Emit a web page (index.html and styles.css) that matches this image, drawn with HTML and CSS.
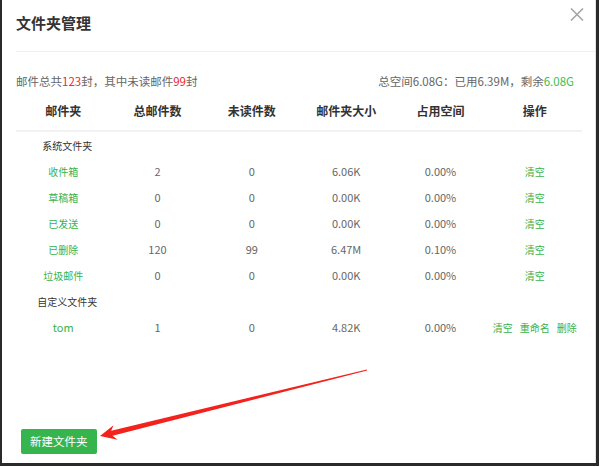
FILE: index.html
```html
<!DOCTYPE html>
<html lang="zh-CN">
<head>
<meta charset="utf-8">
<title>文件夹管理</title>
<link rel="stylesheet" href="styles.css">
</head>
<body>
<div class="frame">
  <div class="dialog">
    <div class="dialog-header">
      <h1 class="title">文件夹管理</h1>
      <span class="close" aria-label="关闭">
        <svg width="14" height="13" viewBox="0 0 14 13"><path d="M1 0.5 L13 12.5 M13 0.5 L1 12.5" stroke="#a6a6a6" stroke-width="1.6" fill="none"/></svg>
      </span>
    </div>
    <div class="summary">
      <span>邮件总共<em class="red">123</em>封，其中未读邮件<em class="red">99</em>封</span>
      <span>总空间6.08G：已用6.39M，剩余<em class="green">6.08G</em></span>
    </div>
    <table class="folders">
      <thead>
        <tr><th>邮件夹</th><th>总邮件数</th><th>未读件数</th><th>邮件夹大小</th><th>占用空间</th><th>操作</th></tr>
      </thead>
      <tbody>
        <tr class="group"><td class="group-label">系统文件夹</td><td></td><td></td><td></td><td></td><td></td></tr>
        <tr><td class="link">收件箱</td><td>2</td><td>0</td><td>6.06K</td><td>0.00%</td><td class="link">清空</td></tr>
        <tr><td class="link">草稿箱</td><td>0</td><td>0</td><td>0.00K</td><td>0.00%</td><td class="link">清空</td></tr>
        <tr><td class="link">已发送</td><td>0</td><td>0</td><td>0.00K</td><td>0.00%</td><td class="link">清空</td></tr>
        <tr><td class="link">已删除</td><td>120</td><td>99</td><td>6.47M</td><td>0.10%</td><td class="link">清空</td></tr>
        <tr><td class="link">垃圾邮件</td><td>0</td><td>0</td><td>0.00K</td><td>0.00%</td><td class="link">清空</td></tr>
        <tr class="group"><td class="group-label">自定义文件夹</td><td></td><td></td><td></td><td></td><td></td></tr>
        <tr><td class="link latin">tom</td><td>1</td><td>0</td><td>4.82K</td><td>0.00%</td><td class="link ops"><span>清空</span><span>重命名</span><span>删除</span></td></tr>
      </tbody>
    </table>
    <div class="footer">
      <button class="btn-new">新建文件夹</button>
    </div>
  </div>
</div>
<svg class="arrow" width="600" height="467" viewBox="0 0 600 467">
  <polygon points="100,436 113.5,425.3 111.2,430.8 366.9,369.4 367.1,370.6 112.5,435.7 117.6,439.8" fill="#f3221c"/>
</svg>
</body>
</html>
```

FILE: styles.css
```css
html, body {
  margin: 0;
  padding: 0;
  background: #fff;
}
body {
  position: relative;
  width: 600px;
  height: 467px;
  overflow: hidden;
  font-family: "Noto Sans CJK SC", "Noto Sans", sans-serif;
  color: #333;
}
.frame {
  box-sizing: border-box;
  width: 599px;
  height: 466px;
  border-left: 2px solid #2a2a2a;
  border-right: 3px solid #2a2a2a;
  border-bottom: 3px solid #2a2a2a;
}
.dialog {
  box-sizing: border-box;
  height: 100%;
  display: flex;
  flex-direction: column;
  border-right: 1px solid #e2e2e2;
}
.dialog-header {
  display: flex;
  justify-content: space-between;
  margin-left: 14px;
  height: 52px;
  border-bottom: 1px solid #f0f0f0;
  padding-right: 11px;
  box-sizing: border-box;
}
.title {
  margin: 12px 0 0 0;
  font-size: 15px;
  line-height: 22px;
  font-weight: bold;
  color: #333;
}
.close {
  display: block;
  margin-top: 8px;
  height: 13px;
}
.close svg { display: block; }
.summary {
  display: flex;
  justify-content: space-between;
  margin: 19px 21px 0 14px;
  font-size: 11.5px;
  line-height: 20px;
  color: #666;
}
.summary em { font-style: normal; }
.red { color: #f0262c; }
.green { color: #3ac04f; }
.folders {
  margin-left: 14px;
  width: 566px;
  table-layout: fixed;
  border-collapse: collapse;
}
.folders th {
  height: 39px;
  padding: 0;
  font-size: 12px;
  font-weight: bold;
  color: #333;
  text-align: center;
  border-bottom: 2px solid #f2f2f2;
}
.folders td {
  height: 26px;
  padding: 0;
  font-size: 11px;
  color: #666;
  text-align: center;
}
.folders td.link {
  color: #38b24c;
  font-size: 10px;
}
.folders td.latin { font-size: 11px; }
.folders td.group-label {
  color: #333;
  font-size: 10px;
  padding-left: 8px;
  white-space: nowrap;
}
.folders td.ops { white-space: nowrap; }
.ops span { margin: 0 3.5px; }
.footer {
  margin-top: auto;
  padding: 0 0 9px 19px;
}
.btn-new {
  display: block;
  height: 25px;
  padding: 0 9px;
  border: none;
  border-radius: 2px;
  background: #36b44e;
  color: #fff;
  font-family: "Noto Sans CJK SC", sans-serif;
  font-size: 11.5px;
  line-height: 25px;
}
.arrow {
  position: absolute;
  left: 0;
  top: 0;
  pointer-events: none;
}
```
